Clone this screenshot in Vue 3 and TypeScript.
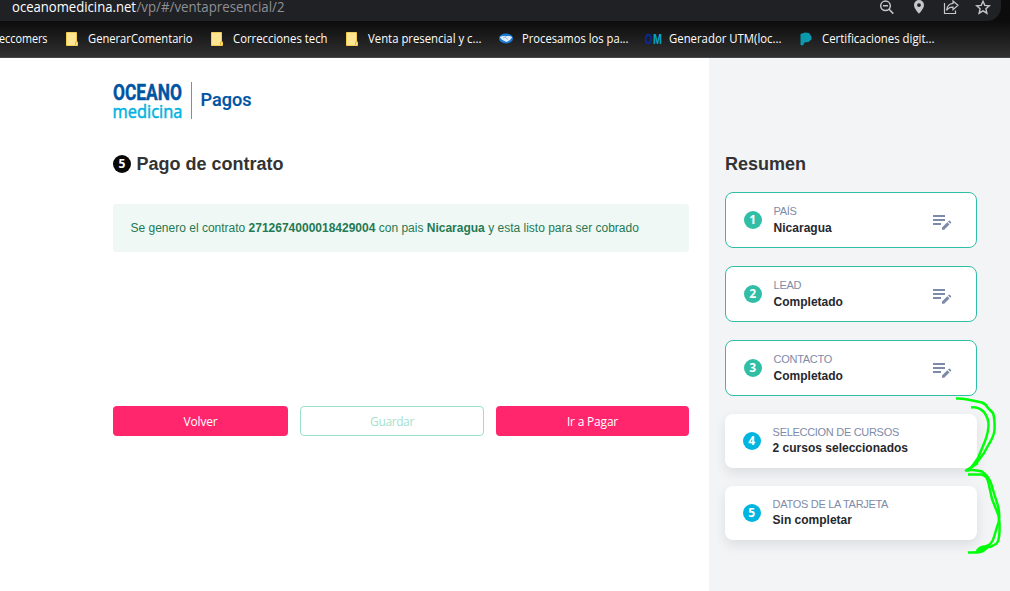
<script setup lang="ts">
interface Bookmark {
  label: string
  width: number
  icon: 'note' | 'handshake' | 'om' | 'leaf'
}

interface Step {
  id: number
  title: string
  value: string
  done: boolean
}

const bookmarks: Bookmark[] = [
  { label: 'GenerarComentario', width: 105, icon: 'note' },
  { label: 'Correcciones tech', width: 95, icon: 'note' },
  { label: 'Venta presencial y c...', width: 114, icon: 'note' },
  { label: 'Procesamos los pa...', width: 107, icon: 'handshake' },
  { label: 'Generador UTM(loc...', width: 113, icon: 'om' },
  { label: 'Certificaciones digit...', width: 113, icon: 'leaf' },
]

const steps: Step[] = [
  { id: 1, title: 'PAÍS', value: 'Nicaragua', done: true },
  { id: 2, title: 'LEAD', value: 'Completado', done: true },
  { id: 3, title: 'CONTACTO', value: 'Completado', done: true },
  { id: 4, title: 'SELECCION DE CURSOS', value: '2 cursos seleccionados', done: false },
  { id: 5, title: 'DATOS DE LA TARJETA', value: 'Sin completar', done: false },
]
</script>

<template>
  <div class="window">
    <header class="chrome">
      <div class="address">
        <svg class="url" width="290" height="21">
          <text x="12" y="12" textLength="124" lengthAdjust="spacingAndGlyphs" fill="#fff">oceanomedicina.net</text>
          <text x="136.500" y="12" textLength="148" lengthAdjust="spacingAndGlyphs" fill="#8f9093">/vp/#/ventapresencial/2</text>
        </svg>
        <div class="tools">
          <svg width="16" height="16" viewBox="0 0 16 16" fill="none" stroke="#c6c7c9" stroke-width="1.500">
            <circle cx="6.500" cy="5.800" r="4.800" /><path d="M10 9.300l4.300 4.300M4 5.800h5" />
          </svg>
          <svg width="16" height="16" viewBox="0 0 16 16">
            <path fill="#c6c7c9" fill-rule="evenodd" d="M8 0a5 5 0 0 0-5 5c0 3.600 5 8.700 5 8.700S13 8.600 13 5a5 5 0 0 0-5-5zm0 3.200a1.900 1.900 0 1 1 0 3.800 1.900 1.900 0 0 1 0-3.800z" />
          </svg>
          <svg width="16" height="16" viewBox="0 0 16 16" fill="none" stroke="#c6c7c9" stroke-width="1.200">
            <path d="M1.500 3v10.500h11v-3" /><path d="M10 1l5 4.300-5 4.300V7.100C7 6.900 5 8.100 3.600 10.400 4 6.400 6.200 3.700 10 3.400z" />
          </svg>
          <svg width="16" height="16" viewBox="0 0 16 16" fill="none" stroke="#c6c7c9" stroke-width="1.400">
            <path d="M8 1.300l1.800 4.100 4.500.4-3.400 3 1 4.400L8 10.900l-3.900 2.300 1-4.400-3.400-3 4.500-.4z" />
          </svg>
        </div>
      </div>
      <nav class="bookmarks">
        <svg class="label" width="48" height="20">
          <text x="-1" y="14" textLength="48.500" lengthAdjust="spacingAndGlyphs">eccomers</text>
        </svg>
        <div v-for="b in bookmarks" :key="b.label" class="bookmark">
          <svg v-if="b.icon === 'note'" width="16" height="16">
            <path d="M2.500 1.500h10v9.500h1v3.500h-11z" fill="#ffe695" stroke="#f2cb4f" /><path d="M11.500 14v-3h2" stroke="#e5b93c" fill="none" />
          </svg>
          <svg v-else-if="b.icon === 'handshake'" width="16" height="16">
            <ellipse cx="8" cy="7.500" rx="7" ry="4.900" fill="#1a78d6" />
            <path d="M1.700 6Q5 4.400 8 5.300 11 4.400 14.300 6L12 9 8.500 11 4 8.800z" fill="#e2effb" />
            <path d="M5 7l2-1 3 2.500" stroke="#7aa9dc" fill="none" stroke-width=".8" />
          </svg>
          <svg v-else-if="b.icon === 'om'" class="om" width="16" height="16">
            <text x="0" y="13" textLength="7.500" lengthAdjust="spacingAndGlyphs" fill="#082c94" stroke="#082c94">O</text>
            <text x="8" y="13" textLength="9" lengthAdjust="spacingAndGlyphs" fill="#00a5cc">M</text>
          </svg>
          <svg v-else width="16" height="16">
            <path d="M2.500 3L7 1.500 11 2l2.500 3.500v3l-3 2.500-4 .5-1.500 3-2.500-.5z" fill="#0b99ad" />
          </svg>
          <svg class="label" :width="b.width" height="20">
            <text x="0" y="14" :textLength="b.width - .5" lengthAdjust="spacingAndGlyphs">{{ b.label }}</text>
          </svg>
        </div>
      </nav>
    </header>

    <div class="page">
      <main class="content">
        <div class="brand">
          <svg width="142" height="40">
            <text class="oceano" x="0" y="19.500" textLength="69" lengthAdjust="spacingAndGlyphs">OCEANO</text>
            <text class="medicina" x="-.5" y="37.500" textLength="70" lengthAdjust="spacingAndGlyphs">medicina</text>
            <path d="M78.500 2v37" stroke="#8c8c8c" />
            <text class="pagos" x="87.500" y="26" textLength="51" lengthAdjust="spacingAndGlyphs">Pagos</text>
          </svg>
        </div>
        <h1 class="heading"><span class="dot dark">5</span><span>Pago de contrato</span></h1>
        <p class="notice">Se genero el contrato <b>2712674000018429004</b> con pais <b>Nicaragua</b> y esta listo para ser cobrado</p>
        <div class="actions">
          <button class="btn">Volver</button>
          <button class="btn outline">Guardar</button>
          <button class="btn">Ir a Pagar</button>
        </div>
      </main>

      <aside class="summary">
        <h2 class="heading">Resumen</h2>
        <section v-for="s in steps" :key="s.id" class="card" :class="{ done: s.done }">
          <span class="dot">{{ s.id }}</span>
          <div class="info">
            <div class="title">{{ s.title }}</div>
            <div class="value">{{ s.value }}</div>
          </div>
          <svg v-if="s.done" class="edit" width="20" height="17" viewBox="0 0 20 17" fill="#7e8ba8">
            <path d="M0 1h12v2H0zM0 5h12v2H0zM0 9h8v2H0z" />
            <path d="M9 13.600l5.300-5.300 2.200 2.200-5.300 5.300H9zM15 7.600l.8-.8q.5-.5 1 0l1.200 1.200q.5.500 0 1l-.8.800z" />
          </svg>
        </section>
      </aside>
    </div>

    <svg class="marks" width="60" height="170" viewBox="950 390 60 170" fill="none" stroke="#00ff08" stroke-width="2.500" stroke-linejoin="round">
      <path d="M956 398.500Q963 398 970 400L982 402.500Q986 404 988 408L993 413Q995 419 994.500 430Q994 436 989 444L984 453 975 465" />
      <path d="M971 407.500Q978 406.500 984 412Q989 419 988.500 426Q988 435 983 446L978 458 971 468" />
      <path d="M978 463L966 470.500Q974 469 982 471.500L987 476Q991 481 993 490L998 506Q1001 519 997 527L994 537Q992 545 985 546.500Q979 547 977 551" />
      <path d="M968 474.500H981Q987 475 988.500 483L992 499 998 514Q1000 520 999.500 532Q999 542 996 544Q990 548 985 547L977 552" />
      <path d="M968 552.500H977Q984 552 987 547.500L983 547 977 551" fill="#00ff08" />
    </svg>
  </div>
</template>

<style>
body {
  margin: 0;
  overflow: hidden;
}
</style>

<style scoped>
.window {
  position: relative;
  width: 1010px;
  height: 591px;
  display: flex;
  flex-direction: column;
  overflow: hidden;
  font-family: "Liberation Sans", Arial, sans-serif;
}
svg {
  display: block;
  flex: none;
  overflow: visible;
}
.chrome {
  height: 58px;
  box-sizing: border-box;
  border-bottom: 1px solid #454545;
  background: linear-gradient(#0c0c0c 0, #0c0c0c 21px, #303030 57px);
}
.address {
  display: flex;
  justify-content: space-between;
  width: 1001px;
  height: 21px;
  background: #202125;
  border-bottom-right-radius: 14px;
}
.url {
  font: 14px "Open Sans", "Noto Sans", sans-serif;
}
.tools {
  display: flex;
  gap: 16px;
  padding-right: 10px;
}
.bookmarks {
  display: flex;
  align-items: center;
  gap: 16px;
  height: 36px;
}
.bookmark {
  display: flex;
  align-items: center;
  gap: 8px;
}
.label {
  font: 12px "Open Sans", "Noto Sans", sans-serif;
  fill: #fff;
}
.om {
  font: bold 14px "Liberation Sans", Arial, sans-serif;
  stroke-width: .5px;
}
.page {
  display: flex;
  flex: 1;
}
.content {
  width: 709px;
  box-sizing: border-box;
  padding: 22px 20px 0 113px;
  background: #fff;
}
.brand {
  height: 72px;
}
.oceano {
  font: bold 22px "Roboto", sans-serif;
  fill: #0054a4;
  stroke: #0054a4;
  stroke-width: .4px;
}
.medicina {
  font: 18px "Open Sans", sans-serif;
  fill: #00b2df;
  stroke: #00b2df;
  stroke-width: .5px;
}
.pagos {
  font: 500 18px "Roboto", sans-serif;
  fill: #0054a4;
  stroke: #0054a4;
  stroke-width: .2px;
}
.heading {
  display: flex;
  align-items: center;
  gap: 5.500px;
  height: 24px;
  margin: 0;
  font-size: 18px;
  line-height: 24px;
  color: #333;
}
.dot {
  display: block;
  flex: none;
  width: 18px;
  height: 18px;
  border-radius: 50%;
  background: #00b5e0;
  color: #fff;
  font: bold 12px/18px "Open Sans", sans-serif;
  text-align: center;
}
.dot.dark {
  background: #080808;
}
.notice {
  height: 48px;
  box-sizing: border-box;
  margin: 28px 0 0;
  padding-left: 17.500px;
  border-radius: 3px;
  background: #eff8f4;
  color: #257953;
  font-size: 12px;
  line-height: 48px;
  white-space: nowrap;
}
.actions {
  display: grid;
  grid-template-columns: 175px 184px 193px;
  gap: 12px;
  margin-top: 154px;
}
.btn {
  height: 30px;
  padding: 0;
  border: 0;
  border-radius: 4px;
  background: #ff266e;
  color: #fff;
  font: 12px "Open Sans", "Noto Sans", sans-serif;
  letter-spacing: -.2px;
}
.btn.outline {
  border: 1px solid #99dfc9;
  background: #fff;
  color: #a3e2cd;
  letter-spacing: -.4px;
}
.summary {
  flex: 1;
  padding: 94px 33px 0 16px;
  background: #f3f4f6;
}
.summary .heading {
  margin-bottom: 16px;
}
.card {
  display: flex;
  align-items: center;
  height: 54px;
  box-sizing: border-box;
  margin-bottom: 18px;
  padding: 0 23px 0 18px;
  border-radius: 8px;
  background: #fff;
  box-shadow: 0 5px 12px rgba(20, 25, 35, .1);
}
.card.done {
  height: 56px;
  border: 1px solid #31bea6;
  box-shadow: none;
}
.card .dot {
  margin-left: -.4px;
}
.done .dot {
  background: #31bea6;
}
.info {
  flex: 1;
  margin: -2px 0 0 12px;
  font-size: 12px;
  line-height: 16px;
}
.done .info {
  margin-top: -1px;
}
.title {
  color: #7e8ba8;
  font-size: 11px;
  letter-spacing: -.3px;
}
.done .title {
  margin: -1px 0 1px;
}
.value {
  color: #25282d;
  font-weight: bold;
}
.edit {
  margin-top: 5px;
}
.marks {
  position: absolute;
  right: 0;
  top: 390px;
}
</style>
